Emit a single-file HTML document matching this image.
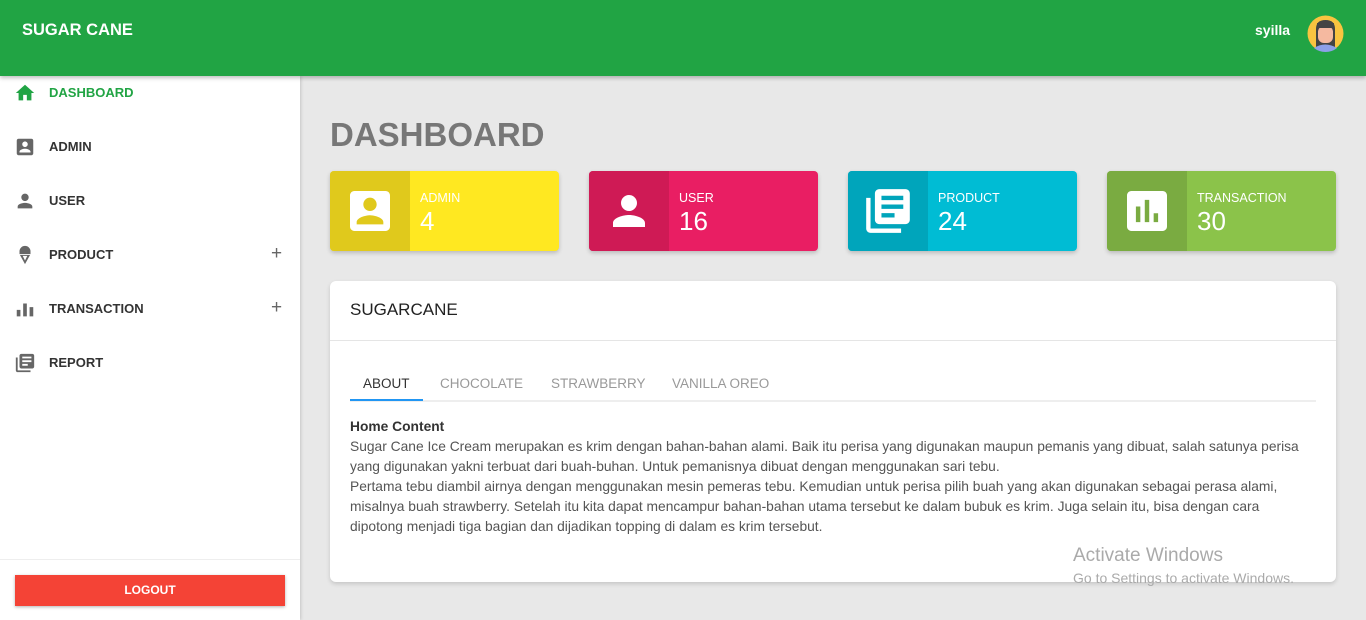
<!DOCTYPE html>
<html><head><style>
*{box-sizing:border-box;margin:0;padding:0}
body{width:1366px;height:620px;overflow:hidden;background:#e8e8e8;font-family:"Liberation Sans",sans-serif;position:relative}
.top{position:absolute;left:0;top:0;width:1366px;height:76px;background:#21a444;box-shadow:0 2px 4px rgba(0,0,0,.25);z-index:2}
.brand{position:absolute;left:22px;top:21px;color:#fff;font-weight:bold;font-size:16.5px}
.uname{position:absolute;left:1255px;top:22px;color:#fff;font-weight:bold;font-size:14px}
.side{position:absolute;left:0;top:76px;width:300px;height:544px;background:#fff;box-shadow:1px 0 3px rgba(0,0,0,.15)}
.item{position:absolute;left:0;width:300px;height:30px;font-size:13px;font-weight:bold;color:#333}
.item svg{position:absolute;left:14px;top:5px}
.item span{position:absolute;left:49px;top:8px}
.item .plus{left:271px;top:4px;font-size:19px;font-weight:normal;color:#666}
.logout{position:absolute;left:15px;top:575px;width:270px;height:31px;background:#f44336;color:#fff;font-size:12px;font-weight:bold;text-align:center;line-height:31px;box-shadow:0 1px 3px rgba(0,0,0,.3)}
h1{position:absolute;left:330px;top:116px;font-size:33px;color:#777;font-weight:bold}
.card{position:absolute;top:171px;width:229px;height:80px;border-radius:4px;overflow:hidden;box-shadow:0 2px 4px rgba(0,0,0,.2);color:#fff}
.card .ic{position:absolute;left:0;top:0;width:80px;height:80px}
.card .ic svg{position:absolute;left:20px;top:20px}
.card .t{position:absolute;left:90px;top:20px;font-size:12.5px}
.card .n{position:absolute;left:90px;top:35px;font-size:26px}
.panel{position:absolute;left:330px;top:281px;width:1006px;height:301px;background:#fff;border-radius:6px;box-shadow:0 2px 4px rgba(0,0,0,.15)}
.ph{height:60px;border-bottom:1px solid #e5e5e5;padding:19px 20px;font-size:17px;color:#222}
.tabs{position:absolute;left:20px;top:83px;width:966px;height:38px;border-bottom:2px solid #eee;font-size:13.5px;color:#999}
.tabs span{position:absolute;top:12px}
.body{position:absolute;left:20px;top:136px;width:960px;font-size:13.8px;line-height:20px;color:#555}
</style></head><body>
<div class="top"><div class="brand">SUGAR CANE</div><div class="uname">syilla</div>
<svg style="position:absolute;left:1307px;top:15px" width="37" height="37" viewBox="0 0 37 37"><circle cx="18.5" cy="18.5" r="18" fill="#f9c440"/><path d="M9 32 V14 q0-9 9.5-9 q9.5 0 9.5 9 V32z" fill="#444"/><rect x="11" y="11" width="15" height="17" rx="6" fill="#f5b9a0"/><path d="M7 33 q11-7 23 0 q-5 4-11.5 4 q-6.5 0-11.5-4z" fill="#8da0e8"/><rect x="10" y="8" width="17" height="5" fill="#444"/></svg></div>
<div class="side">
<div class="item" style="top:1px;color:#21a444"><svg width="22" height="22" viewBox="0 0 24 24"><path fill="#21a444" d="M10 20v-6h4v6h5v-8h3L12 3 2 12h3v8z"/></svg><span>DASHBOARD</span></div>
<div class="item" style="top:55px"><svg width="22" height="22" viewBox="0 0 24 24"><path fill="#666" d="M19 3H5c-1.1 0-2 .9-2 2v14c0 1.1.9 2 2 2h14c1.1 0 2-.9 2-2V5c0-1.1-.9-2-2-2zm-7 3c1.65 0 3 1.35 3 3s-1.35 3-3 3-3-1.35-3-3 1.35-3 3-3zm6 12H6v-1c0-2 4-3.1 6-3.1s6 1.1 6 3.1v1z"/></svg><span>ADMIN</span></div>
<div class="item" style="top:109px"><svg width="22" height="22" viewBox="0 0 24 24"><path fill="#666" d="M12 12c2.2 0 4-1.8 4-4s-1.8-4-4-4-4 1.8-4 4 1.8 4 4 4zm0 2c-2.7 0-8 1.3-8 4v2h16v-2c0-2.7-5.3-4-8-4z"/></svg><span>USER</span></div>
<div class="item" style="top:163px"><svg width="22" height="22" viewBox="0 0 24 24"><path fill="#666" d="M12 2a6 6 0 0 0-6 6v3h12V8a6 6 0 0 0-6-6zM6.5 12l5.5 10 5.5-10zm3 1h5l-2.5 5z"/></svg><span>PRODUCT</span><span class="plus">+</span></div>
<div class="item" style="top:217px"><svg width="22" height="22" viewBox="0 0 24 24"><path fill="#666" d="M3 13h4v7H3zm7-7h4v14h-4zm7 4h4v10h-4z"/></svg><span>TRANSACTION</span><span class="plus">+</span></div>
<div class="item" style="top:271px"><svg width="22" height="22" viewBox="0 0 24 24"><path fill="#666" d="M4 6H2v14c0 1.1.9 2 2 2h14v-2H4V6zm16-4H8c-1.1 0-2 .9-2 2v12c0 1.1.9 2 2 2h12c1.1 0 2-.9 2-2V4c0-1.1-.9-2-2-2zm-1 9H9V9h10v2zm-4 4H9v-2h6v2zm4-8H9V5h10v2z"/></svg><span>REPORT</span></div>
<div style="position:absolute;left:0;top:483px;width:300px;border-top:1px solid #eee"></div>
</div>
<div class="logout">LOGOUT</div>
<h1>DASHBOARD</h1>
<div class="card" style="left:330px;background:#ffe821"><div class="ic" style="background:#e0c91c"><svg width="40" height="40" viewBox="3 3 18 18"><path fill="#fff" d="M19 3H5c-1.1 0-2 .9-2 2v14c0 1.1.9 2 2 2h14c1.1 0 2-.9 2-2V5c0-1.1-.9-2-2-2zm-7 3c1.65 0 3 1.35 3 3s-1.35 3-3 3-3-1.35-3-3 1.35-3 3-3zm6 12H6v-1c0-2 4-3.1 6-3.1s6 1.1 6 3.1v1z"/></svg></div><div class="t">ADMIN</div><div class="n">4</div></div>
<div class="card" style="left:589px;background:#e91e63"><div class="ic" style="background:#cf1a55"><svg width="48" height="48" viewBox="0 0 24 24" style="left:16px;top:16px"><path fill="#fff" d="M12 12c2.2 0 4-1.8 4-4s-1.8-4-4-4-4 1.8-4 4 1.8 4 4 4zm0 2c-2.7 0-8 1.3-8 4v2h16v-2c0-2.7-5.3-4-8-4z"/></svg></div><div class="t">USER</div><div class="n">16</div></div>
<div class="card" style="left:848px;background:#00bcd4"><div class="ic" style="background:#00a5bb"><svg width="48" height="48" viewBox="1 1 22 22" style="left:16px;top:16px"><path fill="#fff" d="M4 6H2v14c0 1.1.9 2 2 2h14v-2H4V6zm16-4H8c-1.1 0-2 .9-2 2v12c0 1.1.9 2 2 2h12c1.1 0 2-.9 2-2V4c0-1.1-.9-2-2-2zm-1 9H9V9h10v2zm-4 4H9v-2h6v2zm4-8H9V5h10v2z"/></svg></div><div class="t">PRODUCT</div><div class="n">24</div></div>
<div class="card" style="left:1107px;background:#8bc34a"><div class="ic" style="background:#7aab41"><svg width="40" height="40" viewBox="3 3 18 18"><path fill="#fff" d="M19 3H5c-1.1 0-2 .9-2 2v14c0 1.1.9 2 2 2h14c1.1 0 2-.9 2-2V5c0-1.1-.9-2-2-2zM9 17H7v-7h2v7zm4 0h-2V7h2v10zm4 0h-2v-4h2v4z"/></svg></div><div class="t">TRANSACTION</div><div class="n">30</div></div>
<div class="panel"><div class="ph">SUGARCANE</div>
<div class="tabs"><span style="left:13px;color:#333">ABOUT</span><span style="left:90px">CHOCOLATE</span><span style="left:201px">STRAWBERRY</span><span style="left:322px">VANILLA OREO</span><div style="position:absolute;left:0;top:35px;width:73px;height:2px;background:#2196f3"></div></div>
<div class="body"><b style="color:#333">Home Content</b><br>Sugar Cane Ice Cream merupakan es krim dengan bahan-bahan alami. Baik itu perisa yang digunakan maupun pemanis yang dibuat, salah satunya perisa yang digunakan yakni terbuat dari buah-buhan. Untuk pemanisnya dibuat dengan menggunakan sari tebu.<br>Pertama tebu diambil airnya dengan menggunakan mesin pemeras tebu. Kemudian untuk perisa pilih buah yang akan digunakan sebagai perasa alami, misalnya buah strawberry. Setelah itu kita dapat mencampur bahan-bahan utama tersebut ke dalam bubuk es krim. Juga selain itu, bisa dengan cara dipotong menjadi tiga bagian dan dijadikan topping di dalam es krim tersebut.</div>
</div>
<div style="position:absolute;left:1073px;top:545px;color:#aaa;font-size:19px">Activate Windows</div>
<div style="position:absolute;left:1073px;top:570px;color:#aaa;font-size:14px">Go to Settings to activate Windows.</div>
</body></html>
